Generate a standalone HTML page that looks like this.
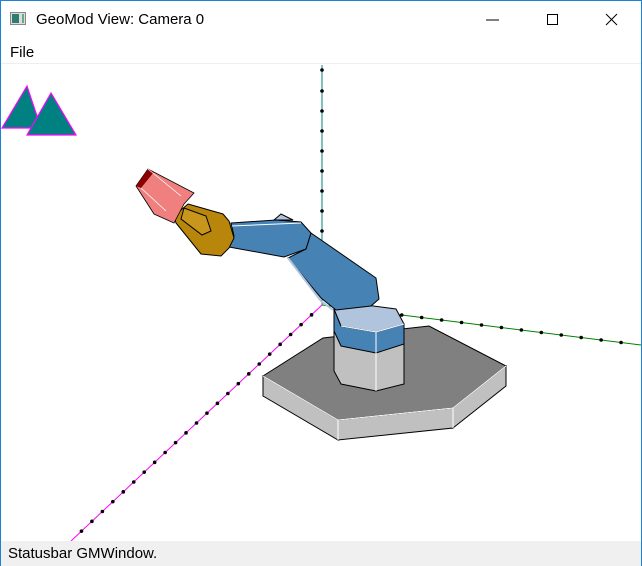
<!DOCTYPE html>
<html><head><style>
html,body{margin:0;padding:0;width:642px;height:566px;overflow:hidden;background:#fff;font-family:"Liberation Sans",sans-serif}
.win{position:absolute;left:0;top:0;width:640px;height:565px;border:1px solid #1883d7;border-bottom:none;background:#fff}
.title{position:absolute;left:35px;top:10px;font-size:15px;color:#000}
.menu{position:absolute;left:9px;top:43px;font-size:15px;color:#000}
.status{position:absolute;left:0;top:540px;width:640px;height:25px;background:#f0f0f0;font-size:15px}
.status span{position:absolute;left:7px;top:4px}
</style></head><body>
<div class="win">
<svg width="16" height="14" style="position:absolute;left:9px;top:11px"><rect x="0.5" y="0.5" width="15" height="12" fill="#ddd" stroke="#888"/><rect x="2" y="2" width="7" height="9" fill="#2e7d6e"/><rect x="12" y="2" width="2" height="9" fill="#6a8"/></svg>
<div class="title">GeoMod View: Camera 0</div>
<svg width="160" height="30" style="position:absolute;left:480px;top:4px"><line x1="5" y1="15" x2="18" y2="15" stroke="#000"/><rect x="66.5" y="9.5" width="10" height="10" fill="none" stroke="#000"/><path d="M125 9 L136 20 M136 9 L125 20" stroke="#000"/></svg>
<div class="menu">File</div>
<div style="position:absolute;left:0;top:62px;width:640px;height:1px;background:#eee"></div>
<svg width="640" height="478" style="position:absolute;left:0;top:63px" viewBox="0 63 640 478">
<polygon points="26,85 1,127 40,127" fill="#008080" stroke="#f0f" stroke-width="1.2"/>
<polygon points="50,92 26,134 75,134" fill="#008080" stroke="#f0f" stroke-width="1.2"/>
<line x1="321" y1="64" x2="321" y2="304" stroke="#008080"/>
<g fill="#000">
<circle cx="321" cy="69" r="1.8"/><circle cx="321" cy="90" r="1.8"/><circle cx="321" cy="110" r="1.8"/><circle cx="321" cy="130" r="1.8"/><circle cx="321" cy="150" r="1.8"/><circle cx="321" cy="170" r="1.8"/><circle cx="321" cy="190" r="1.8"/><circle cx="321" cy="210" r="1.8"/><circle cx="321" cy="230" r="1.8"/>
</g>
<line x1="321" y1="304" x2="70" y2="540" stroke="#f0f"/>
<line x1="321" y1="304" x2="640" y2="344" stroke="#008000"/>
<g fill="#000" id="mt"></g>
<polygon points="262,375 322,337 428,325 505,365 452,407 337,419" fill="#808080" stroke="#000"/>
<polygon points="262,375 337,419 337,439 262,395" fill="#c0c0c0" stroke="#000"/>
<polygon points="337,419 452,407 452,427 337,439" fill="#c0c0c0" stroke="#000"/>
<polygon points="452,407 505,365 505,385 452,427" fill="#c0c0c0" stroke="#000"/>
<line x1="262" y1="375" x2="337" y2="419" stroke="#fff"/><line x1="337" y1="419" x2="452" y2="407" stroke="#fff"/><line x1="452" y1="407" x2="505" y2="365" stroke="#fff"/><line x1="337" y1="419" x2="337" y2="439" stroke="#fff"/><line x1="452" y1="407" x2="452" y2="427" stroke="#fff"/>
<polygon points="333,308 340,325 375,331 403,323 403,383 375,390 340,383 333,370" fill="#c0c0c0" stroke="#000"/>
<polygon points="333,308 340,325 375,331 403,323 403,343 375,352 340,345 333,330" fill="#4682b4" stroke="#000"/>
<polygon points="333,308 357,303 395,308 403,323 375,331 340,325" fill="#b0c4de" stroke="#000"/>
<path d="M340,325 L375,331 L403,323 M375,331 V390" stroke="#fff" fill="none"/>
<polygon points="310,232 375,277 378,298 370,305 335,309 320,297 287,257 305,248" fill="#4682b4" stroke="#000"/>
<path d="M287,257 L320,300 L332,309" stroke="#b0c4de" stroke-width="2" fill="none"/>
<polygon points="273,219 280,213 292,219" fill="#b0c4de" stroke="#000"/>
<polygon points="230,222 275,219 300,221 310,232 305,248 283,256 228,246 233,235" fill="#4682b4" stroke="#000"/>
<line x1="231" y1="225" x2="300" y2="222" stroke="#fff"/>
<polygon points="187,203 222,213 228,220 233,237 228,247 220,255 200,253 175,222 173,215" fill="#b8860b" stroke="#000"/>
<polygon points="183,207 205,215 210,230 201,234 180,218" fill="#c8961b" stroke="#000"/>
<polygon points="135,185 147,168 193,192 183,203 173,222 153,213" fill="#f08080" stroke="#000" stroke-width="0.8"/>
<polygon points="135,185 147,168 153,171 140,187" fill="#8b0000"/>
<path d="M147,168 L180,195 M140,187 L165,210" stroke="#fff" stroke-width="0.8"/>
</svg>
<div class="status"><span>Statusbar GMWindow.</span></div>
</div>
<script>
var g=document.getElementById('mt'),s='';
for(var i=1;i<24;i++){var t=i/24;s+='<circle cx="'+(321-251*t)+'" cy="'+(304+236*t)+'" r="1.8"/>';}
for(var i=1;i<16;i++){var t=i/16;s+='<circle cx="'+(321+319*t)+'" cy="'+(304+40*t)+'" r="1.8"/>';}
g.innerHTML=s;
</script>
</body></html>
